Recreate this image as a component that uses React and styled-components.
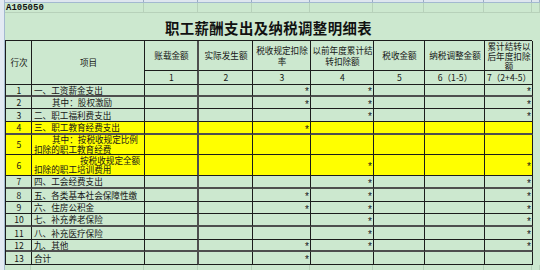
import React from 'react'
import styled, { createGlobalStyle } from 'styled-components'

const GREEN = '#cce8cf'
const FAINT = '#b7d1ba'
const LINE = '#1c1c1c'
const HEAVY = '#4e4e4e'
const YELLOW = '#ffff00'
const COLS = [26, 113, 54, 54, 58, 63, 51, 60, 48]
const colTemplate = COLS.map((w) => `${w}px`).join(' ')

const GlobalStyle = createGlobalStyle`
  html, body {
    margin: 0;
    padding: 0;
    background: ${GREEN};
  }
  body {
    width: 540px;
    height: 270px;
    overflow: hidden;
    font-family: "Noto Sans CJK SC", "Noto Sans", sans-serif;
    color: #161616;
  }
`

const Screen = styled.div`
  display: flex;
  width: 540px;
  height: 270px;
  overflow: hidden;
`

const RowHeaderStrip = styled.div`
  flex: none;
  width: 4px;
  background: #e3eaf3;
  border-right: 1px solid #a3b9d0;
`

const Sheet = styled.div`
  flex: 1;
  display: flex;
  flex-direction: column;
  min-width: 0;
`

const ColumnHeaderStrip = styled.div`
  display: grid;
  grid-template-columns: ${colTemplate} 1fr;
  height: 3px;
  box-sizing: border-box;
  background: #dee6ef;
  border-bottom: 1px solid #a3b9d0;
`

const Tick = styled.div`
  border-right: 1px solid #9aaec4;
`

const FaintRow = styled.div`
  display: grid;
  grid-template-columns: ${colTemplate} 1fr;
  height: ${(p) => p.$h}px;
  box-sizing: border-box;
  border-bottom: ${(p) => (p.$bottom ? `1px solid ${FAINT}` : 'none')};
`

const FaintCell = styled.div`
  grid-column: span ${(p) => p.$span || 1};
  border-right: 1px solid ${FAINT};
  box-sizing: border-box;
  overflow: visible;
  white-space: nowrap;
`

const Code = styled.span`
  display: block;
  padding: 1px 0 0 1px;
  font-family: "Liberation Mono", monospace;
  font-weight: 700;
  font-size: 9px;
  line-height: 8px;
  color: #111;
`

const TitleRow = styled.div`
  width: 527px;
  height: 27px;
  display: flex;
  align-items: center;
  justify-content: center;
  padding-top: 1px;
  box-sizing: border-box;
  font-size: 14.4px;
  font-weight: 700;
  letter-spacing: 0.4px;
  color: #111;
`

const Table = styled.div`
  display: grid;
  grid-template-columns: ${colTemplate};
  grid-template-rows: ${(p) => p.$rows};
  width: 527px;
  box-sizing: border-box;
  border-top: 1px solid ${LINE};
  border-left: 1px solid ${LINE};
`

const justify = { left: 'flex-start', right: 'flex-end', center: 'center' }

const Cell = styled.div`
  box-sizing: border-box;
  grid-row: ${(p) => (p.$span ? `span ${p.$span}` : 'auto')};
  display: flex;
  align-items: center;
  justify-content: ${(p) => justify[p.$align || 'center']};
  text-align: ${(p) => p.$align || 'center'};
  padding: 0 1px 0 2px;
  border-right: ${(p) => (p.$heavyRight ? `2px solid ${HEAVY}` : `1px solid ${LINE}`)};
  border-bottom: ${(p) => (p.$heavyBottom ? `2px solid ${HEAVY}` : `1px solid ${LINE}`)};
  background: ${(p) => (p.$yellow ? YELLOW : 'transparent')};
  font-size: 8.6px;
  line-height: ${(p) => p.$lh || 10.5}px;
  white-space: nowrap;
  overflow: visible;
`

const ItemText = styled.div`
  text-indent: ${(p) => p.$indent || 0}px;
  white-space: nowrap;
`

const Mark = styled.span`
  font-family: "Liberation Sans", sans-serif;
  font-size: 10px;
  line-height: 10px;
  padding-top: 4px;
`

const headers = [
  ['账载金额'],
  ['实际发生额'],
  ['税收规定扣除', '率'],
  ['以前年度累计结', '转扣除额'],
  ['税收金额'],
  ['纳税调整金额'],
  ['累计结转以', '后年度扣除', '额'],
]

const numbers = ['1', '2', '3', '4', '5', '6（1-5）', '7（2+4-5）']

const rows = [
  { no: '1', lines: ['一、工资薪金支出'], h: 12, marks: [3, 4, 7], heavy: true },
  { no: '2', lines: ['其中：股权激励'], indent: 18, h: 12, marks: [3, 4, 7] },
  { no: '3', lines: ['二、职工福利费支出'], h: 13, marks: [4, 7] },
  { no: '4', lines: ['三、职工教育经费支出'], h: 13, marks: [3], yellow: true, heavy: true },
  { no: '5', lines: ['其中：按税收规定比例', '扣除的职工教育经费'], indent: 18, h: 20, marks: [], yellow: true },
  { no: '6', lines: ['按税收规定全额', '扣除的职工培训费用'], indent: 46, h: 21, marks: [4, 7], yellow: true },
  { no: '7', lines: ['四、工会经费支出'], h: 13, marks: [4, 7], heavy: true },
  { no: '8', lines: ['五、各类基本社会保障性缴'], h: 13, marks: [3, 4, 7] },
  { no: '9', lines: ['六、住房公积金'], h: 12, marks: [3, 4, 7] },
  { no: '10', lines: ['七、补充养老保险'], h: 13, marks: [4, 7], heavy: true },
  { no: '11', lines: ['八、补充医疗保险'], h: 13, marks: [4, 7] },
  { no: '12', lines: ['九、其他'], h: 12, marks: [3, 4, 7], heavy: true },
  { no: '13', lines: ['合计'], h: 13, marks: [3] },
]

const rowTemplate = ['30px', '14px', ...rows.map((r) => `${r.h}px`)].join(' ')

const App = () => {
  return (
    <>
      <GlobalStyle />
      <Screen>
        <RowHeaderStrip />
        <Sheet>
          <ColumnHeaderStrip>
            {COLS.concat([0]).map((w, i) => (
              <Tick key={i} />
            ))}
          </ColumnHeaderStrip>
          <FaintRow $h={10} $bottom>
            <FaintCell $span={2}>
              <Code>A105050</Code>
            </FaintCell>
            {COLS.slice(2)
              .concat([0])
              .map((w, i) => (
                <FaintCell key={i} />
              ))}
          </FaintRow>
          <TitleRow>职工薪酬支出及纳税调整明细表</TitleRow>
          <Table $rows={rowTemplate}>
            <Cell $span={2}>行次</Cell>
            <Cell $span={2}>项目</Cell>
            {headers.map((h, i) => (
              <Cell key={`h${i}`} $heavyRight={i === 0} $lh={h.length > 2 ? 10 : 11}>
                <div>
                  {h.map((line, j) => (
                    <div key={j}>{line}</div>
                  ))}
                </div>
              </Cell>
            ))}
            {numbers.map((n, i) => (
              <Cell key={`n${i}`} $heavyRight={i === 0}>
                {n}
              </Cell>
            ))}
            {rows.map((r) => (
              <React.Fragment key={r.no}>
                <Cell $yellow={r.yellow} $heavyBottom={r.heavy}>
                  {r.no}
                </Cell>
                <Cell
                  $align="left"
                  $lh={r.lines.length > 1 ? 9.5 : 10.5}
                  $yellow={r.yellow}
                  $heavyBottom={r.heavy}
                >
                  <div>
                    {r.lines.map((line, j) => (
                      <ItemText key={j} $indent={j === 0 ? r.indent : 0}>
                        {line}
                      </ItemText>
                    ))}
                  </div>
                </Cell>
                {[1, 2, 3, 4, 5, 6, 7].map((c) => (
                  <Cell
                    key={c}
                    $align="right"
                    $yellow={r.yellow}
                    $heavyBottom={r.heavy}
                    $heavyRight={c === 1}
                  >
                    {r.marks.includes(c) && <Mark>*</Mark>}
                  </Cell>
                ))}
              </React.Fragment>
            ))}
          </Table>
          <FaintRow $h={5}>
            {COLS.concat([0]).map((w, i) => (
              <FaintCell key={i} />
            ))}
          </FaintRow>
        </Sheet>
      </Screen>
    </>
  )
}

export default App
